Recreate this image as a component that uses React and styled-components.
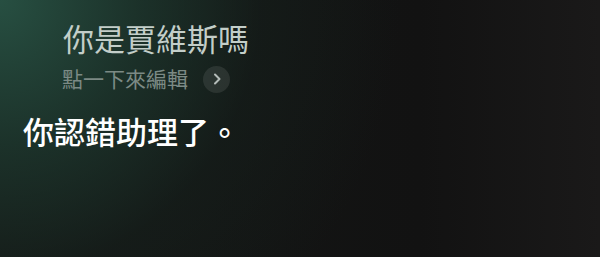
import React from "react";
import styled, { createGlobalStyle } from "styled-components";

const Global = createGlobalStyle`
  html, body { margin: 0; padding: 0; background: #141414; }
  body { font-family: "Noto Sans CJK TC", "Noto Sans", sans-serif; }
`;

const Screen = styled.div`
  width: 600px;
  height: 257px;
  box-sizing: border-box;
  overflow: hidden;
  background:
    radial-gradient(ellipse 400px 420px at 0px 0px, rgba(40, 82, 68, 0.95) 0%, rgba(30, 58, 48, 0.75) 35%, rgba(22, 36, 31, 0.4) 65%, rgba(20, 24, 22, 0) 100%),
    linear-gradient(90deg, #151816 0%, #121212 70%, #1a1919 100%);
  padding: 18px 0 0 0;
  display: flex;
  flex-direction: column;
`;

const Query = styled.div`
  margin-left: 63px;
  font-size: 31px;
  line-height: 40px;
  color: #c3cec9;
`;

const EditRow = styled.div`
  margin-left: 62px;
  margin-top: 6px;
  display: flex;
  align-items: center;
  gap: 15px;
  height: 28px;
`;

const EditHint = styled.span`
  font-size: 21px;
  line-height: 28px;
  color: #7c8a85;
`;

const ChevronButton = styled.span`
  width: 27px;
  height: 27px;
  border-radius: 50%;
  background: rgba(255, 255, 255, 0.09);
  display: flex;
  align-items: center;
  justify-content: center;
  margin-top: 2px;
`;

const Answer = styled.div`
  margin-left: 23px;
  margin-top: 19px;
  font-size: 31px;
  line-height: 40px;
  font-weight: 500;
  color: #ffffff;
`;

export default function App() {
  return (
    <>
      <Global />
      <Screen>
        <Query>你是賈維斯嗎</Query>
        <EditRow>
          <EditHint>點一下來編輯</EditHint>
          <ChevronButton>
            <svg width="12" height="14" viewBox="0 0 12 14">
              <path d="M4 2.5 L8.5 7 L4 11.5" fill="none" stroke="#b4bcb9" strokeWidth="2" strokeLinecap="round" strokeLinejoin="round" />
            </svg>
          </ChevronButton>
        </EditRow>
        <Answer>你認錯助理了。</Answer>
      </Screen>
    </>
  );
}
